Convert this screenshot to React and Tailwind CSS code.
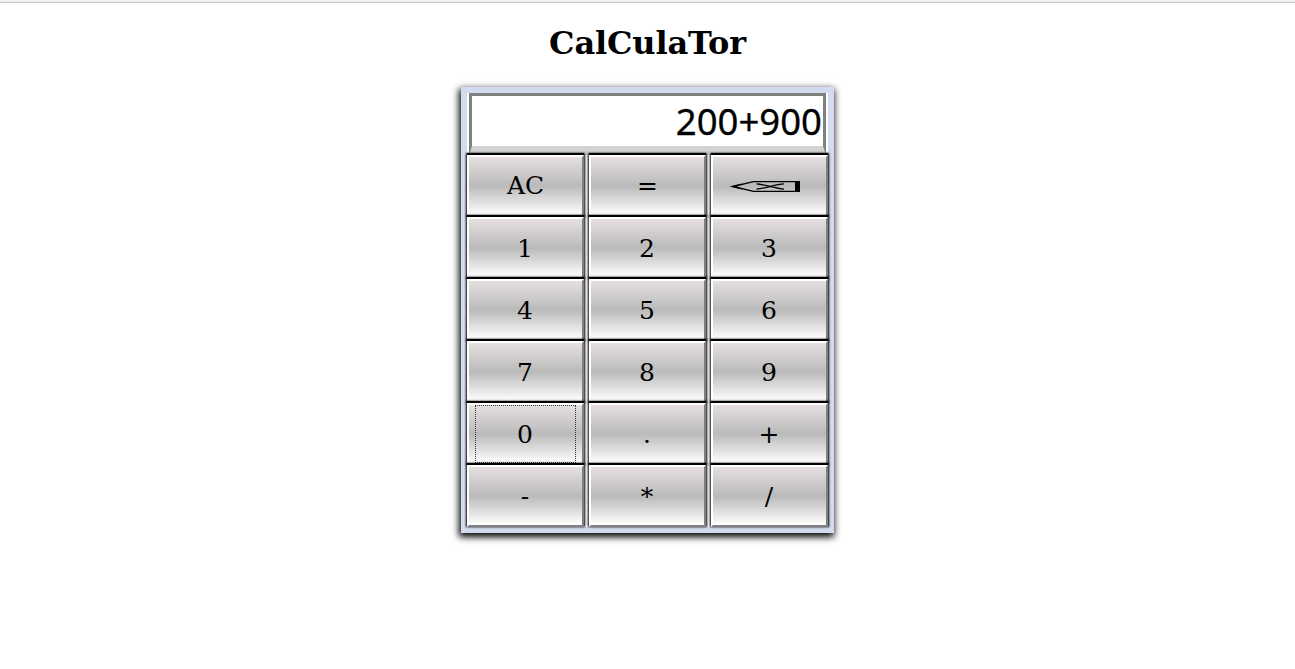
const keys = ["AC", "=", "erase", "1", "2", "3", "4", "5", "6", "7", "8", "9", "0", ".", "+", "-", "*", "/"];

function EraseIcon() {
  return (
    <svg width="72" height="14" viewBox="0 0 72 14" className="mt-[2px] mr-[9px] block" fill="none" stroke="#000">
      <path d="M4 6.5 24.5 1.6H70V11.4H24.5Z" strokeWidth="1.3" />
      <path d="M0.5 6.5 13 3.6 8 6.5 13 9.4Z" fill="#000" stroke="none" />
      <path d="M66 1h5v11h-5z" fill="#000" stroke="none" />
      <path d="M27.5 3.9C36 4.4 46 8.6 55 9.1M27.5 9.1C36 8.6 46 4.4 55 3.9" strokeWidth="1.3" />
    </svg>
  );
}

function Key({ label, firstRow }) {
  return (
    <button
      type="button"
      aria-label={label}
      className={`relative flex h-[62px] w-[117px] items-center justify-center border-2 border-t-white border-l-white border-r-[#808080] border-b-[#808080] bg-[linear-gradient(to_bottom,#e6dfe0,#bababa_50%,#ffffff)] text-[25px] leading-none text-black shadow-[0_-2px_0_#000,0_-1px_2px_1px_#000] ${firstRow ? "pb-px" : "pt-px pr-px"}`}
    >
      {label === "erase" ? <EraseIcon /> : <span>{label}</span>}
      {label === "0" && <span className="absolute top-0 left-[6px] h-[58px] w-[101px] border border-dotted border-[#333]" />}
    </button>
  );
}

export default function App() {
  return (
    <main className="flex h-[669px] w-full flex-col items-center overflow-hidden bg-white font-['DejaVu_Serif',serif] text-black">
      <div className="h-[3px] w-full shrink-0 border-b border-[#c4c2c0] bg-[#f2f1f0]" />
      <h1 className="mt-[21px] h-[63px] text-[32px] leading-[38px] font-bold tracking-[-0.15px]">CalCulaTor</h1>
      <section className="h-[446px] w-[373px] border-6 border-[#d3dcef] bg-white shadow-[-1px_3px_7px_1px_#000]">
        <div className="mx-[2px] flex h-[62px] items-start justify-end border-t-3 border-r-3 border-b-9 border-l-3 border-t-[#808080] border-r-[#808080] border-b-[#d3d3d3] border-l-[#808080] bg-white pr-px font-['Noto_Sans',sans-serif] text-[36.5px] leading-[50px] [-webkit-text-stroke:0.3px_#000]">
          200+900
        </div>
        <div className="grid grid-cols-[repeat(3,117px)] gap-x-[5px]">
          {keys.map((k, i) => (
            <Key key={k} label={k} firstRow={i < 3} />
          ))}
        </div>
      </section>
    </main>
  );
}
